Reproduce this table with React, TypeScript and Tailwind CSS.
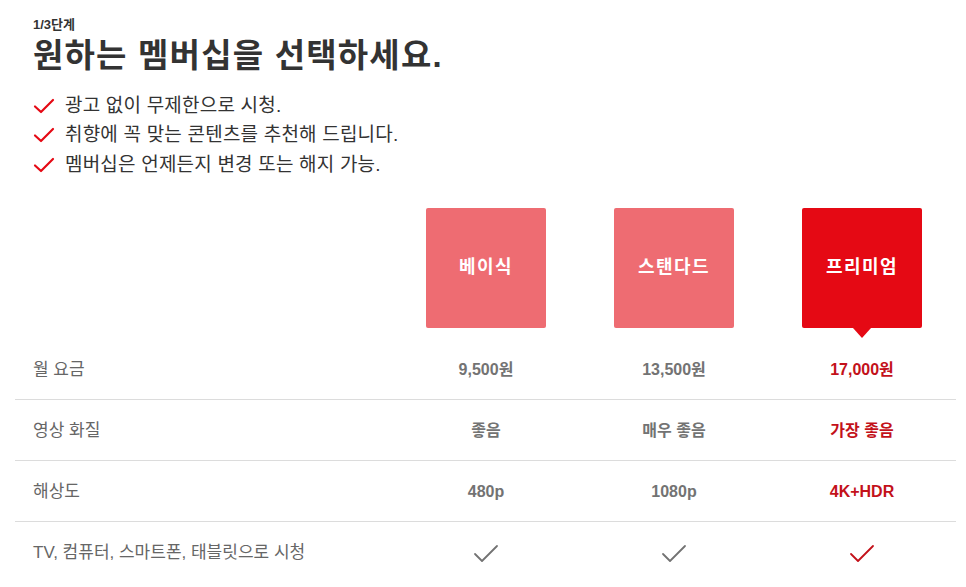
import React from "react";

const FONT = { fontFamily: '"Liberation Sans", "Noto Sans CJK KR", sans-serif' };

function ListCheck() {
  return (
    <svg width="22" height="18" viewBox="0 0 22 18" className="shrink-0">
      <path d="M2 9.5 L8 15 L20 3" fill="none" stroke="#e50914" strokeWidth="2.2" strokeLinecap="round" strokeLinejoin="round" />
    </svg>
  );
}

function TableCheck({ red }: { red?: boolean }) {
  return (
    <svg width="26" height="20" viewBox="0 0 26 20">
      <path d="M2 11 L9 18 L24 3" fill="none" stroke={red ? "#c3111a" : "#737373"} strokeWidth="1.8" strokeLinecap="round" strokeLinejoin="round" />
    </svg>
  );
}

const plans = [
  { name: "베이식", sel: false },
  { name: "스탠다드", sel: false },
  { name: "프리미엄", sel: true },
];

const rows: { label: string; values: (string | null)[] }[] = [
  { label: "월 요금", values: ["9,500원", "13,500원", "17,000원"] },
  { label: "영상 화질", values: ["좋음", "매우 좋음", "가장 좋음"] },
  { label: "해상도", values: ["480p", "1080p", "4K+HDR"] },
  { label: "TV, 컴퓨터, 스마트폰, 태블릿으로 시청", values: [null, null, null] },
];

export default function App() {
  return (
    <div className="w-[966px] h-[587px] bg-white overflow-hidden text-[#333]" style={FONT}>
      <div className="pl-[33px] pt-[17px]">
        <div className="text-[13px] font-bold leading-[16px] text-[#333]">1/3단계</div>
        <h1 className="text-[33px] font-bold leading-[40px] mt-[3px] tracking-[1.2px]">원하는 멤버십을 선택하세요.</h1>
        <ul className="mt-[15px] flex flex-col">
          {["광고 없이 무제한으로 시청.", "취향에 꼭 맞는 콘텐츠를 추천해 드립니다.", "멤버십은 언제든지 변경 또는 해지 가능."].map((t) => (
            <li key={t} className="flex items-center gap-[10px] h-[29.5px] text-[19px] text-[#333] tracking-[0.2px]">
              <ListCheck />
              <span>{t}</span>
            </li>
          ))}
        </ul>
      </div>

      <div className="ml-[15px] w-[941px] mt-[28px]">
        <div className="grid grid-cols-[377px_188px_188px_188px]">
          <div />
          {plans.map((p) => (
            <div key={p.name} className="flex justify-center">
              <div
                className={
                  "relative w-[120px] h-[120px] rounded-[2px] flex items-center justify-center text-white font-bold text-[18px] tracking-[1.5px] " +
                  (p.sel ? "bg-[#e50914]" : "bg-[#ee6c72]")
                }
              >
                {p.name}
                {p.sel && (
                  <div className="absolute left-1/2 -translate-x-1/2 top-full w-0 h-0 border-l-[9px] border-r-[9px] border-t-[10px] border-l-transparent border-r-transparent border-t-[#e50914]" />
                )}
              </div>
            </div>
          ))}
        </div>

        <div className="mt-[11px]">
          {rows.map((r, i) => (
            <div
              key={r.label}
              className={
                "grid grid-cols-[377px_188px_188px_188px] h-[61px] items-center pt-[2px] " +
                (i < rows.length - 1 ? "border-b border-[#dcdcdc]" : "")
              }
            >
              <div className="pl-[18px] text-[17px] text-[#666]">{r.label}</div>
              {r.values.map((v, j) => (
                <div
                  key={j}
                  className={
                    "flex justify-center text-[16px] font-bold " + (j === 2 ? "text-[#c3111a]" : "text-[#737373]")
                  }
                >
                  {v === null ? <TableCheck red={j === 2} /> : v}
                </div>
              ))}
            </div>
          ))}
        </div>
      </div>
    </div>
  );
}
